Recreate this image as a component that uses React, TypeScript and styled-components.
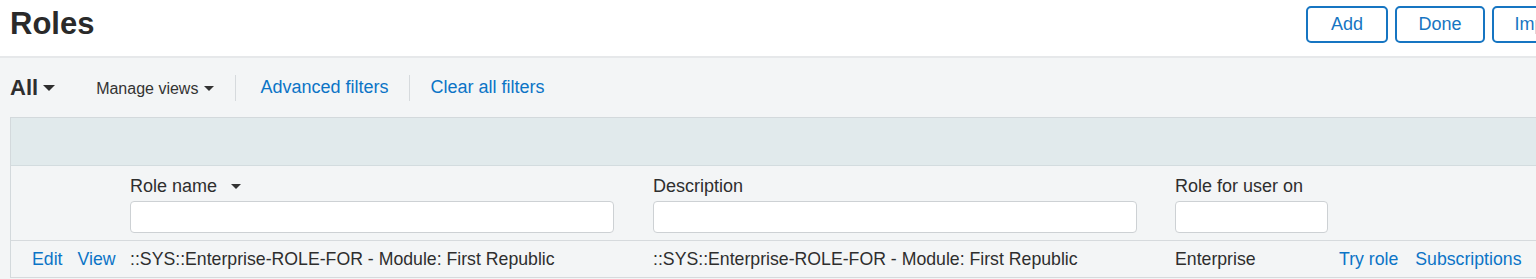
import React from 'react';
import styled, { createGlobalStyle } from 'styled-components';

const GlobalStyle = createGlobalStyle`
    html, body {
        margin: 0;
        padding: 0;
        overflow: hidden;
        background-color: #F3F5F6;
        font-family: "Liberation Sans", Arial, sans-serif;
        color: #2E2E2E;
    }
`;

interface Column {
    title: string,
    inputWidth: number,
    sortable?: boolean
}

const columns: Column[] = [
    { title: 'Role name', inputWidth: 484, sortable: true },
    { title: 'Description', inputWidth: 484 },
    { title: 'Role for user on', inputWidth: 153 }
];

const rows = [
    {
        name: '::SYS::Enterprise-ROLE-FOR - Module: First Republic',
        description: '::SYS::Enterprise-ROLE-FOR - Module: First Republic',
        roleFor: 'Enterprise'
    }
];

const Caret = ({ size }: { size: number }) => (
    <svg width={size} height={size / 2} viewBox="0 0 10 5">
        <path d="M0 0 L10 0 L5 5 Z" fill="currentColor" />
    </svg>
);

const App = () => {
    return (
        <Page>
            <GlobalStyle />
            <Header>
                <Title>Roles</Title>
                <Actions>
                    <OutlineButton type="button" $width={82}>Add</OutlineButton>
                    <OutlineButton type="button" $width={90}>Done</OutlineButton>
                    <OutlineButton type="button" $width={96}>Import</OutlineButton>
                </Actions>
            </Header>
            <Toolbar>
                <ViewPicker>
                    All <Caret size={12} />
                </ViewPicker>
                <ManageViews>
                    Manage views <Caret size={10} />
                </ManageViews>
                <Divider $after={24} />
                <ToolLink>Advanced filters</ToolLink>
                <Divider $after={20} />
                <ToolLink>Clear all filters</ToolLink>
            </Toolbar>
            <Table>
                <Band />
                <HeadRow>
                    <HeadCell />
                    {columns.map((col) => (
                        <HeadCell key={col.title}>
                            <HeadTitle>
                                {col.title}
                                {col.sortable && <Caret size={10} />}
                            </HeadTitle>
                            <FilterInput type="text" $width={col.inputWidth} />
                        </HeadCell>
                    ))}
                    <HeadCell />
                </HeadRow>
                {rows.map((row, i) => (
                    <DataRow key={i}>
                        <ActionCell>
                            <RowLink>Edit</RowLink>
                            <RowLink>View</RowLink>
                        </ActionCell>
                        <Cell>{row.name}</Cell>
                        <Cell>{row.description}</Cell>
                        <Cell>{row.roleFor}</Cell>
                        <LinksCell>
                            <RowLink>Try role</RowLink>
                            <RowLink>Subscriptions</RowLink>
                        </LinksCell>
                    </DataRow>
                ))}
            </Table>
        </Page>
    );
};

export default App;

const Page = styled.div`
    width: 1600px;
`;

const Header = styled.div`
    height: 58px;
    box-sizing: border-box;
    background-color: #FFFFFF;
    border-bottom: 2px solid #E6E8EA;
    display: flex;
    align-items: flex-start;
    justify-content: space-between;
    padding: 0 0 0 10px;
`;

const Title = styled.h1`
    margin: 6px 0 0;
    font-size: 31px;
    font-weight: 600;
    line-height: 36px;
    color: #2A2A2A;
`;

const Actions = styled.div`
    display: flex;
    gap: 7px;
    padding-top: 6px;
    margin-right: 12px;
`;

const OutlineButton = styled.button<{ $width: number }>`
    width: ${(p) => p.$width}px;
    height: 37px;
    padding: 0;
    border: 2px solid #1675C2;
    border-radius: 5px;
    background-color: #FFFFFF;
    color: #1675C2;
    font-family: "Liberation Sans", Arial, sans-serif;
    font-size: 18px;
    cursor: pointer;
`;

const Toolbar = styled.div`
    height: 59px;
    display: flex;
    align-items: center;
    padding: 0 10px;
    color: #2E2E2E;
`;

const ViewPicker = styled.div`
    display: flex;
    align-items: center;
    gap: 5px;
    font-size: 22px;
    font-weight: 600;
    margin-right: 41px;
`;

const ManageViews = styled.div`
    display: flex;
    align-items: center;
    gap: 6px;
    font-size: 16px;
    color: #333333;
    padding-top: 2px;
`;

const Divider = styled.span<{ $after: number }>`
    width: 1px;
    height: 26px;
    background-color: #D6DADD;
    margin-left: 21px;
    margin-right: ${(p) => p.$after}px;
`;

const ToolLink = styled.a`
    font-size: 18px;
    color: #0B74C6;
    cursor: pointer;
`;

const Table = styled.div`
    margin-left: 10px;
    border: 1px solid #D3D9DC;
    border-right: none;
    border-bottom: none;
`;

const Band = styled.div`
    height: 47px;
    background-color: #E1EAEC;
    border-bottom: 1px solid #D3DCDF;
`;

const gridColumns = '119px 523px 522px 164px 1fr';

const HeadRow = styled.div`
    display: grid;
    grid-template-columns: ${gridColumns};
    padding: 10px 0 7px;
    background-color: #F3F5F6;
    border-bottom: 1px solid #D6DADD;
`;

const HeadCell = styled.div`
    display: flex;
    flex-direction: column;
    gap: 4px;
`;

const HeadTitle = styled.div`
    display: flex;
    align-items: center;
    gap: 14px;
    font-size: 18px;
    line-height: 21px;
    color: #2E2E2E;
    svg {
        color: #333333;
    }
`;

const FilterInput = styled.input<{ $width: number }>`
    width: ${(p) => p.$width}px;
    height: 32px;
    box-sizing: border-box;
    border: 1px solid #CDD1D4;
    border-radius: 4px;
    background-color: #FFFFFF;
    outline: none;
`;

const DataRow = styled.div`
    display: grid;
    grid-template-columns: ${gridColumns};
    height: 36px;
    align-items: center;
    background-color: #F3F5F6;
    border-bottom: 1px solid #D6DADD;
    font-size: 17.7px;
`;

const Cell = styled.div`
    white-space: nowrap;
    color: #2E2E2E;
`;

const ActionCell = styled.div`
    display: flex;
    gap: 15px;
    padding-left: 21px;
`;

const LinksCell = styled.div`
    display: flex;
    gap: 17px;
`;

const RowLink = styled.a`
    color: #0B74C6;
    cursor: pointer;
    white-space: nowrap;
`;
